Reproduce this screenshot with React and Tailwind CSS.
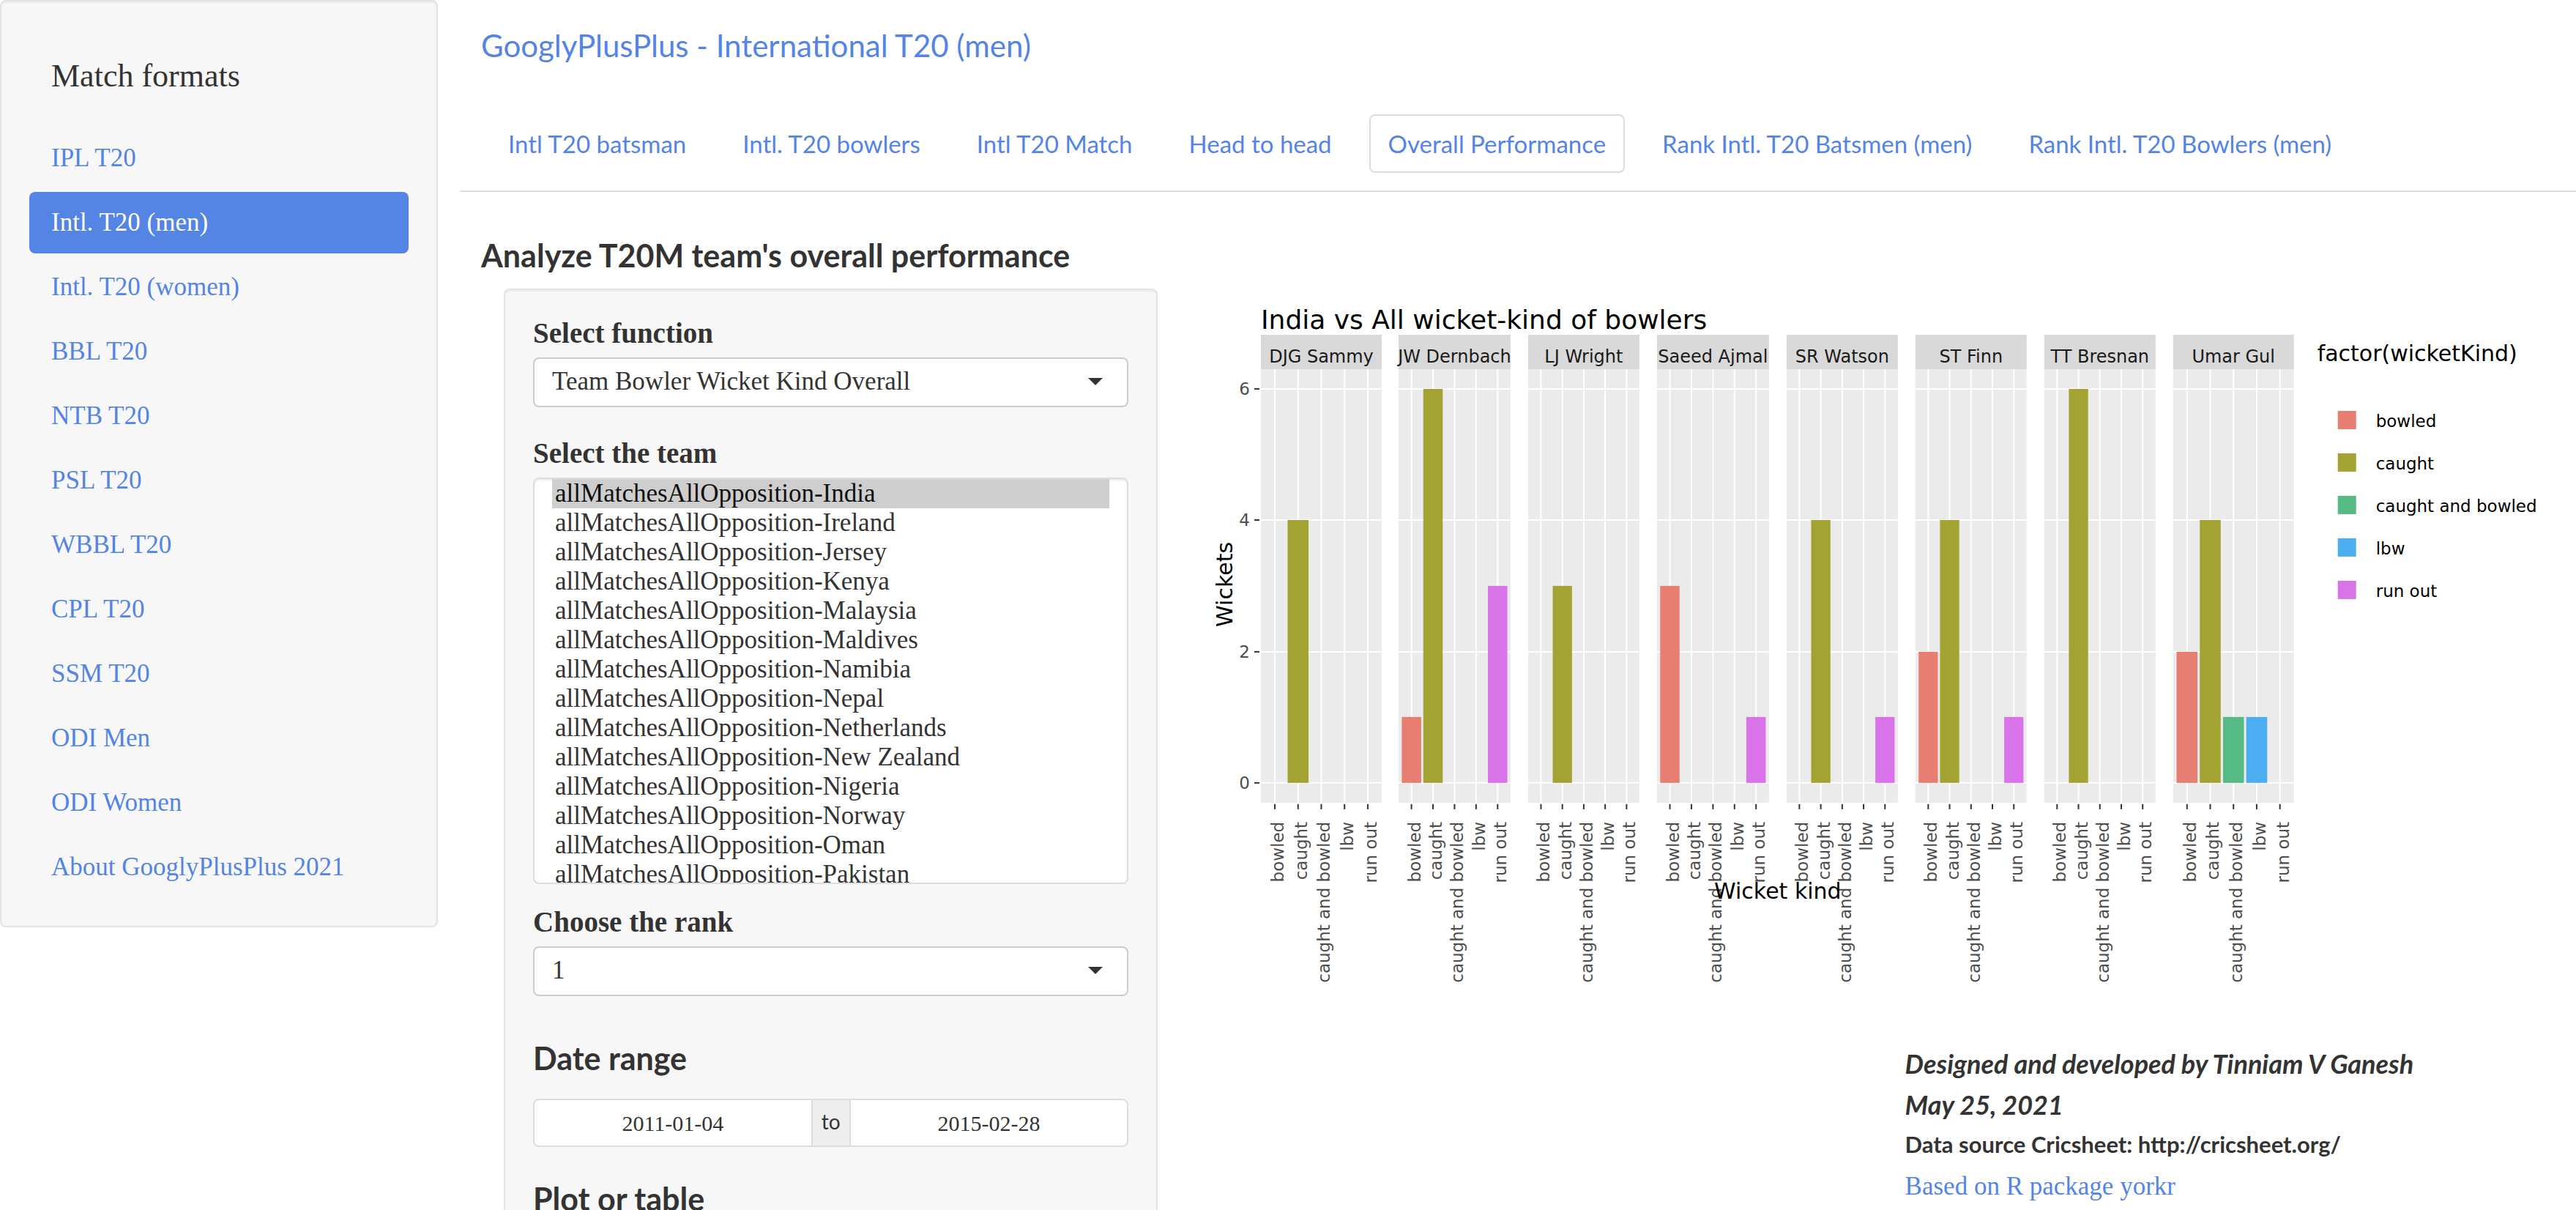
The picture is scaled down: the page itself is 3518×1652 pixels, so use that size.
const formats = [
  'IPL T20',
  'Intl. T20 (men)',
  'Intl. T20 (women)',
  'BBL T20',
  'NTB T20',
  'PSL T20',
  'WBBL T20',
  'CPL T20',
  'SSM T20',
  'ODI Men',
  'ODI Women',
  'About GooglyPlusPlus 2021',
]

const tabs = [
  'Intl T20 batsman',
  'Intl. T20 bowlers',
  'Intl T20 Match',
  'Head to head',
  'Overall Performance',
  'Rank Intl. T20 Batsmen (men)',
  'Rank Intl. T20 Bowlers (men)',
]

const teams = [
  'India',
  'Ireland',
  'Jersey',
  'Kenya',
  'Malaysia',
  'Maldives',
  'Namibia',
  'Nepal',
  'Netherlands',
  'New Zealand',
  'Nigeria',
  'Norway',
  'Oman',
  'Pakistan',
]

const kinds = [
  { name: 'bowled', color: '#e87d72' },
  { name: 'caught', color: '#a3a333' },
  { name: 'caught and bowled', color: '#56ba84' },
  { name: 'lbw', color: '#4dadf1' },
  { name: 'run out', color: '#d873ea' },
]

// wickets are listed in the order of `kinds`
const bowlers = [
  { name: 'DJG Sammy', x: 81, width: 165, wickets: [0, 4, 0, 0, 0] },
  { name: 'JW Dernbach', x: 269, width: 153, wickets: [1, 6, 0, 0, 3] },
  { name: 'LJ Wright', x: 446, width: 152, wickets: [0, 3, 0, 0, 0] },
  { name: 'Saeed Ajmal', x: 622, width: 153, wickets: [3, 0, 0, 0, 1] },
  { name: 'SR Watson', x: 799, width: 152, wickets: [0, 4, 0, 0, 1] },
  { name: 'ST Finn', x: 975, width: 152, wickets: [2, 4, 0, 0, 1] },
  { name: 'TT Bresnan', x: 1151, width: 152, wickets: [0, 6, 0, 0, 0] },
  { name: 'Umar Gul', x: 1327, width: 165, wickets: [2, 4, 1, 1, 0] },
]

const yFor = (wickets) => Math.round(675 - wickets * 89.7)

function Facet({ name, x, width, wickets }) {
  const step = width / 5.2
  const centers = kinds.map((_, i) => x + step * (i + 0.6))

  return (
    <g>
      <rect x={x} y="63" width={width} height="47" fill="#d9d9d9" />
      <rect x={x} y="110" width={width} height="592" fill="#ebebeb" />
      <text x={x + width / 2} y="101" textAnchor="middle" fill="#1a1a1a" className="text-[24px]">
        {name}
      </text>
      {[0, 2, 4, 6].map((tick) => (
        <line key={tick} x1={x} x2={x + width} y1={yFor(tick)} y2={yFor(tick)} stroke="white" strokeWidth="2" />
      ))}
      {centers.map((cx, i) => (
        <g key={kinds[i].name}>
          <line x1={cx} x2={cx} y1="110" y2="702" stroke="white" strokeWidth="2" />
          <line x1={cx} x2={cx} y1="704" y2="711" stroke="#333333" strokeWidth="2" />
          {wickets[i] > 0 && (
            <rect
              x={cx - step * 0.45}
              y={yFor(wickets[i])}
              width={step * 0.9}
              height={675 - yFor(wickets[i])}
              fill={kinds[i].color}
            />
          )}
          <text transform={`translate(${cx + 12} 728) rotate(-90)`} textAnchor="end" fill="#4d4d4d">
            {kinds[i].name}
          </text>
        </g>
      ))}
    </g>
  )
}

function WicketChart() {
  return (
    <svg
      viewBox="0 0 1847 1014"
      className="block w-full font-['DejaVu_Sans',sans-serif] text-[23px]"
      role="img"
      aria-label="India vs All wicket-kind of bowlers"
    >
      <text x="81" y="55" className="text-[36px]">
        India vs All wicket-kind of bowlers
      </text>
      {bowlers.map((bowler) => (
        <Facet key={bowler.name} {...bowler} />
      ))}

      {/* Y axis */}
      {[0, 2, 4, 6].map((tick) => (
        <g key={tick}>
          <line x1="72" x2="79" y1={yFor(tick)} y2={yFor(tick)} stroke="#333333" strokeWidth="2" />
          <text x="66" y={yFor(tick) + 8} textAnchor="end" fill="#4d4d4d">
            {tick}
          </text>
        </g>
      ))}
      <text transform="translate(42 404) rotate(-90)" textAnchor="middle" className="text-[30px]">
        Wickets
      </text>
      <text x="787" y="833" textAnchor="middle" className="text-[30px]">
        Wicket kind
      </text>

      {/* Legend */}
      <text x="1524" y="99" className="text-[30px]">
        factor(wicketKind)
      </text>
      {kinds.map((kind, i) => (
        <g key={kind.name}>
          <rect x="1552" y={167 + i * 58} width="25" height="25" fill={kind.color} />
          <text x="1604" y={189 + i * 58}>
            {kind.name}
          </text>
        </g>
      ))}
    </svg>
  )
}

function SelectBox({ id, options }) {
  return (
    <div className="relative mt-[10px]">
      <select
        id={id}
        className="h-[68px] w-full appearance-none rounded-lg border-2 border-[#cccccc] bg-white pr-16 pb-0.5 pl-6 text-[35px]"
      >
        {options.map((option) => (
          <option key={option}>{option}</option>
        ))}
      </select>
      <svg viewBox="0 0 20 10" className="pointer-events-none absolute top-7 right-[35px] h-[10px] w-[20px]">
        <path d="M0 0h20L10 10z" fill="#333333" />
      </svg>
    </div>
  )
}

function Sidebar() {
  return (
    <aside className="w-[17%] shrink-0 self-start rounded-lg border-2 border-[#e3e3e3] bg-[#f7f7f7] px-[38px] pt-[78px] pb-[38px] shadow-[inset_0_2px_2px_rgba(0,0,0,0.05)]">
      <h2 className="px-[30px] text-[44px] leading-[48px]">Match formats</h2>
      <nav className="mt-[46px] flex flex-col gap-1">
        {formats.map((format) => (
          <a
            key={format}
            href="#"
            className={
              format === 'Intl. T20 (men)'
                ? 'rounded-lg bg-[#5484e4] px-[30px] text-[35px] leading-[84px] text-white'
                : 'rounded-lg px-[30px] text-[35px] leading-[84px] text-[#5484e4]'
            }
          >
            {format}
          </a>
        ))}
      </nav>
    </aside>
  )
}

function FilterForm() {
  return (
    <form className="mx-[30px] rounded-lg border-2 border-[#e3e3e3] bg-[#f7f7f7] px-[38px] pt-9 pb-[38px] shadow-[inset_0_2px_2px_rgba(0,0,0,0.05)]">
      <label htmlFor="function" className="block text-[39px] leading-[46px] font-bold">
        Select function
      </label>
      <SelectBox id="function" options={['Team Bowler Wicket Kind Overall']} />

      <label htmlFor="team" className="mt-10 block text-[39px] leading-[46px] font-bold">
        Select the team
      </label>
      <select
        id="team"
        size={14}
        defaultValue="India"
        className="mt-[10px] block h-[555px] w-full rounded-lg border-2 border-[#dddddd] bg-white px-6 text-[35px] shadow-[inset_0_2px_2px_rgba(0,0,0,0.08)] [scrollbar-width:none]"
      >
        {teams.map((team) => (
          <option key={team} value={team} className="h-[40px] min-h-0 px-1 py-0 leading-[40px]">
            allMatchesAllOpposition-{team}
          </option>
        ))}
      </select>

      <label htmlFor="rank" className="mt-[29px] block text-[39px] leading-[46px] font-bold">
        Choose the rank
      </label>
      <SelectBox id="rank" options={['1', '2', '3']} />

      <h3 className="mt-[61px] font-['Lato',sans-serif] text-[43px] leading-[48px] font-bold">Date range</h3>
      <div className="mt-[31px] flex h-[66px] overflow-hidden rounded-lg border-2 border-[#dddddd] bg-white text-[30px]">
        <input aria-label="Start date" defaultValue="2011-01-04" className="min-w-0 flex-1 text-center" />
        <span className="flex items-center border-x-2 border-[#dddddd] bg-[#eeeeee] px-3 pb-1 font-['Lato',sans-serif] text-[28px]">
          to
        </span>
        <input aria-label="End date" defaultValue="2015-02-28" className="min-w-0 flex-1 text-center" />
      </div>

      <h3 className="mt-[47px] font-['Lato',sans-serif] text-[43px] leading-[48px] font-bold">Plot or table</h3>
    </form>
  )
}

export default function App() {
  return (
    <div className="flex h-screen overflow-hidden bg-white font-['Liberation_Serif',serif] text-[#333333]">
      <Sidebar />

      <main className="ml-[30px] min-w-0 flex-1">
        <h1 className="pt-[38px] pl-[29px] font-['Lato',sans-serif] text-[42px] leading-[48px] text-[#5484e4]">
          GooglyPlusPlus - International T20 (men)
        </h1>
        <nav className="mt-[70px] flex gap-[25px] border-b-2 border-[#dddddd] pb-6 pl-[40px] font-['Lato',sans-serif] text-[33px] leading-[76px] whitespace-nowrap text-[#5484e4]">
          {tabs.map((tab) => (
            <a
              key={tab}
              href="#"
              className={
                tab === 'Overall Performance'
                  ? 'rounded-lg border-2 border-[#dddddd] px-6'
                  : 'rounded-lg border-2 border-transparent px-6'
              }
            >
              {tab}
            </a>
          ))}
        </nav>

        <h2 className="mt-[63px] pl-[29px] font-['Lato',sans-serif] text-[43px] leading-[48px] font-bold">
          Analyze T20M team's overall performance
        </h2>
        <div className="mt-[21px] grid grid-cols-3 pl-[30px]">
          <FilterForm />
          <section className="col-span-2 px-[30px]">
            <WicketChart />
            <footer className="ml-[52%] pt-4 font-['Lato',sans-serif] font-bold whitespace-nowrap">
              <p className="text-[36px] leading-[56px] italic">Designed and developed by Tinniam V Ganesh</p>
              <p className="text-[36px] leading-[56px] italic">May 25, 2021</p>
              <p className="text-[31px] leading-[52px]">Data source Cricsheet: http://cricsheet.org/</p>
              <a
                href="#"
                className="mt-2 inline-block font-['Liberation_Serif',serif] text-[35px] leading-[48px] font-normal text-[#5484e4]"
              >
                Based on R package yorkr
              </a>
            </footer>
          </section>
        </div>
      </main>
    </div>
  )
}
